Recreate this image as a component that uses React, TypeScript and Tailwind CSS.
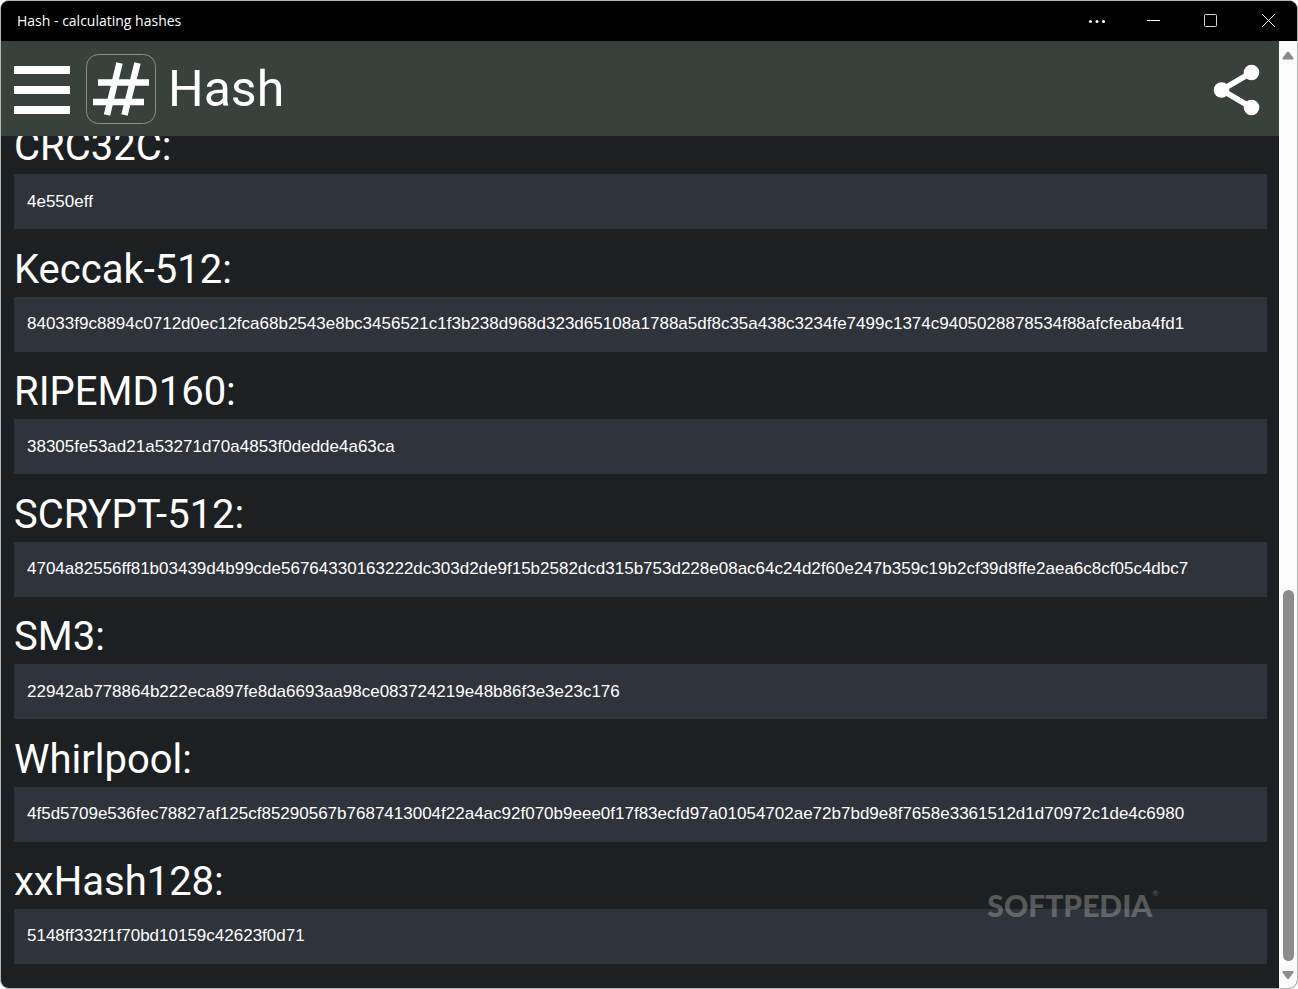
import React from "react";

type THash = {
  name: string;
  value: string;
};

const HASHES: THash[] = [
  { name: "CRC32C", value: "4e550eff" },
  {
    name: "Keccak-512",
    value:
      "84033f9c8894c0712d0ec12fca68b2543e8bc3456521c1f3b238d968d323d65108a1788a5df8c35a438c3234fe7499c1374c9405028878534f88afcfeaba4fd1",
  },
  { name: "RIPEMD160", value: "38305fe53ad21a53271d70a4853f0dedde4a63ca" },
  {
    name: "SCRYPT-512",
    value:
      "4704a82556ff81b03439d4b99cde56764330163222dc303d2de9f15b2582dcd315b753d228e08ac64c24d2f60e247b359c19b2cf39d8ffe2aea6c8cf05c4dbc7",
  },
  {
    name: "SM3",
    value: "22942ab778864b222eca897fe8da6693aa98ce083724219e48b86f3e3e23c176",
  },
  {
    name: "Whirlpool",
    value:
      "4f5d5709e536fec78827af125cf85290567b7687413004f22a4ac92f070b9eee0f17f83ecfd97a01054702ae72b7bd9e8f7658e3361512d1d70972c1de4c6980",
  },
  { name: "xxHash128", value: "5148ff332f1f70bd10159c42623f0d71" },
];

function WindowButton(props: { label: string; children: React.ReactNode }) {
  return (
    <button
      aria-label={props.label}
      className="flex h-full w-[57px] items-center justify-center"
      type="button"
    >
      <svg
        className="h-[19px] w-[19px]"
        fill="none"
        stroke="#ffffff"
        viewBox="0 0 19 19"
      >
        {props.children}
      </svg>
    </button>
  );
}

function TitleBar() {
  return (
    <div className="flex h-10 shrink-0 items-center justify-between bg-black pb-0.5 pl-4">
      <span className="font-['Open_Sans',sans-serif] text-[14px] text-white">
        Hash - calculating hashes
      </span>
      <div className="flex h-full">
        <WindowButton label="More">
          <g fill="#ffffff" stroke="none">
            <circle cx="2.5" cy="10.5" r="1.5" />
            <circle cx="9" cy="10.5" r="1.5" />
            <circle cx="15.5" cy="10.5" r="1.5" />
          </g>
        </WindowButton>
        <WindowButton label="Minimize">
          <path d="M2 9.5h13" />
        </WindowButton>
        <WindowButton label="Maximize">
          <rect height="12" rx="1" stroke="#d6d6d6" width="12" x="2.5" y="3.5" />
        </WindowButton>
        <WindowButton label="Close">
          <path d="M3 3l13 13M16 3L3 16" />
        </WindowButton>
      </div>
    </div>
  );
}

function AppHeader() {
  return (
    <header className="flex h-[95px] shrink-0 items-center bg-[#39413c] px-[13px] text-white">
      <button
        aria-label="Menu"
        className="flex flex-col gap-3 pt-0.5"
        type="button"
      >
        <span className="h-2 w-14 bg-white" />
        <span className="h-2 w-14 bg-white" />
        <span className="h-2 w-14 bg-white" />
      </button>
      <svg
        className="ml-4 h-[70px] w-[70px]"
        fill="none"
        viewBox="0 0 70 70"
      >
        <rect
          height="69"
          rx="12"
          stroke="#8b918d"
          width="69"
          x="0.5"
          y="0.5"
        />
        <path
          d="M12 28.5h51M7 48h51M33.5 9L21 61M51.5 9L38.5 61"
          stroke="#ffffff"
          strokeWidth="6.5"
        />
      </svg>
      <h1 className="ml-3 text-[50px] leading-[60px]">Hash</h1>
      <button aria-label="Share" className="ml-auto mr-[5px] pt-0.5" type="button">
        <svg className="h-[52px] w-[50px]" viewBox="0 0 50 52">
          <path
            d="M40.5 8.5L10.5 26l30 17.5"
            fill="none"
            stroke="#ffffff"
            strokeWidth="5.5"
          />
          <g fill="#ffffff">
            <circle cx="40.5" cy="8.5" r="7.8" />
            <circle cx="10.5" cy="26" r="7.8" />
            <circle cx="40.5" cy="43.5" r="7.8" />
          </g>
        </svg>
      </button>
    </header>
  );
}

function HashField(props: THash) {
  const id = `hash-${props.name}`;
  return (
    <div className="flex flex-1 flex-col">
      <label
        className="flex flex-1 items-end pb-[3px] text-[40px] leading-[48px] text-white"
        htmlFor={id}
      >
        {props.name}:
      </label>
      <input
        className="h-[55px] w-full bg-[#2f333b] px-[13px] font-['Liberation_Sans',Arial,sans-serif] text-[17px] text-white outline-none"
        id={id}
        readOnly
        type="text"
        value={props.value}
      />
    </div>
  );
}

function ScrollBar() {
  return (
    <div className="flex w-[18px] shrink-0 flex-col items-center bg-[#fcfcfc] pt-[10px] pb-2">
      <svg className="h-[10px] w-3" fill="#8b8b8b" viewBox="0 0 12 10">
        <path d="M5 1q1-1 2 0l4.5 6q.5 1.5-1 1.5h-9q-1.5 0-1-1.5z" />
      </svg>
      <div className="flex w-[11px] flex-1 flex-col pb-[9px]">
        <div className="grow-[530]" />
        <div className="grow-[371] rounded-full bg-[#8b8b8b]" />
      </div>
      <svg className="h-[10px] w-3" fill="#8b8b8b" viewBox="0 0 12 10">
        <path d="M5 8.5q1 1 2 0l4.5-6q.5-1.5-1-1.5h-9q-1.500 0-1 1.500z" />
      </svg>
    </div>
  );
}

function Watermark() {
  return (
    <div className="pointer-events-none absolute right-[138px] bottom-[65px] flex items-start font-['Lato',sans-serif] text-white opacity-25">
      <span className="text-[30px] leading-[36px] font-black">SOFTPEDIA</span>
      <span className="text-[8px] leading-[12px]">®</span>
    </div>
  );
}

export default function App() {
  return (
    <div className="h-screen bg-white font-['Roboto',sans-serif]">
      <div className="relative flex h-full flex-col overflow-hidden rounded-[9px] border border-[#b4b6b5] bg-[#1d2022]">
        <TitleBar />
        <div className="flex min-h-0 flex-1">
          <div className="flex min-w-0 flex-1 flex-col">
            <AppHeader />
            <main className="flex min-h-0 flex-1 flex-col overflow-hidden pr-3 pb-6 pl-[13px]">
              {/* list is scrolled, first label slides under the header */}
              <div className="-mt-[29px] flex flex-1 flex-col">
                {HASHES.map((hash) => (
                  <HashField key={hash.name} {...hash} />
                ))}
              </div>
            </main>
          </div>
          <ScrollBar />
        </div>
        <Watermark />
      </div>
    </div>
  );
}
